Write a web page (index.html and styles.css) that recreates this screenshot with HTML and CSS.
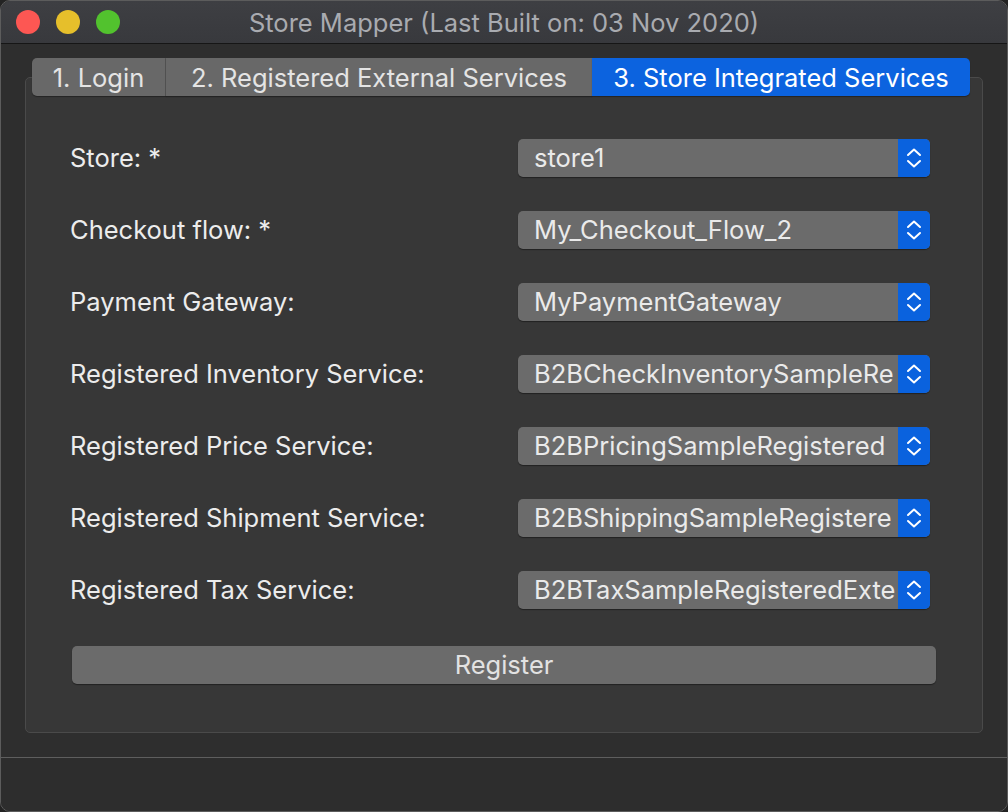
FILE: index.html
```html
<!DOCTYPE html>
<html>
<head>
<meta charset="utf-8">
<link rel="stylesheet" href="styles.css">
</head>
<body>
<div class="window">
  <div class="titlebar">
    <div class="lights">
      <span class="light red"></span>
      <span class="light yellow"></span>
      <span class="light green"></span>
    </div>
    <div class="title">Store Mapper (Last Built on: 03 Nov 2020)</div>
  </div>
  <div class="content">
    <div class="tabs">
      <div class="tab t1">1. Login</div>
      <div class="tab t2">2. Registered External Services</div>
      <div class="tab t3 active">3. Store Integrated Services</div>
    </div>
    <div class="group">
      <div class="form">
        <div class="label">Store: *</div>
        <div class="popup"><span class="value">store1</span><span class="arrows"><svg width="18" height="26" viewBox="0 0 18 26"><path d="M3 10 L9 4.5 L15 10 M3 16 L9 21.5 L15 16" fill="none" stroke="#fff" stroke-width="2" stroke-linecap="round" stroke-linejoin="round"/></svg></span></div>

        <div class="label">Checkout flow: *</div>
        <div class="popup"><span class="value">My_Checkout_Flow_2</span><span class="arrows"><svg width="18" height="26" viewBox="0 0 18 26"><path d="M3 10 L9 4.5 L15 10 M3 16 L9 21.5 L15 16" fill="none" stroke="#fff" stroke-width="2" stroke-linecap="round" stroke-linejoin="round"/></svg></span></div>

        <div class="label">Payment Gateway:</div>
        <div class="popup"><span class="value">MyPaymentGateway</span><span class="arrows"><svg width="18" height="26" viewBox="0 0 18 26"><path d="M3 10 L9 4.5 L15 10 M3 16 L9 21.5 L15 16" fill="none" stroke="#fff" stroke-width="2" stroke-linecap="round" stroke-linejoin="round"/></svg></span></div>

        <div class="label">Registered Inventory Service:</div>
        <div class="popup"><span class="value">B2BCheckInventorySampleRe</span><span class="arrows"><svg width="18" height="26" viewBox="0 0 18 26"><path d="M3 10 L9 4.5 L15 10 M3 16 L9 21.5 L15 16" fill="none" stroke="#fff" stroke-width="2" stroke-linecap="round" stroke-linejoin="round"/></svg></span></div>

        <div class="label">Registered Price Service:</div>
        <div class="popup"><span class="value">B2BPricingSampleRegistered</span><span class="arrows"><svg width="18" height="26" viewBox="0 0 18 26"><path d="M3 10 L9 4.5 L15 10 M3 16 L9 21.5 L15 16" fill="none" stroke="#fff" stroke-width="2" stroke-linecap="round" stroke-linejoin="round"/></svg></span></div>

        <div class="label">Registered Shipment Service:</div>
        <div class="popup"><span class="value">B2BShippingSampleRegistere</span><span class="arrows"><svg width="18" height="26" viewBox="0 0 18 26"><path d="M3 10 L9 4.5 L15 10 M3 16 L9 21.5 L15 16" fill="none" stroke="#fff" stroke-width="2" stroke-linecap="round" stroke-linejoin="round"/></svg></span></div>

        <div class="label">Registered Tax Service:</div>
        <div class="popup"><span class="value">B2BTaxSampleRegisteredExte</span><span class="arrows"><svg width="18" height="26" viewBox="0 0 18 26"><path d="M3 10 L9 4.5 L15 10 M3 16 L9 21.5 L15 16" fill="none" stroke="#fff" stroke-width="2" stroke-linecap="round" stroke-linejoin="round"/></svg></span></div>
      </div>
      <div class="button">Register</div>
    </div>
  </div>
  <div class="statusbar"></div>
</div>
</body>
</html>
```

FILE: styles.css
```css
html, body {
  margin: 0;
  padding: 0;
  background: #232323;
}
body {
  font-family: Inter, "Noto Sans", Roboto, sans-serif;
  -webkit-font-smoothing: antialiased;
}
.window {
  width: 1008px;
  height: 812px;
  box-sizing: border-box;
  border: 1px solid #5c5c5c;
  border-radius: 10px;
  overflow: hidden;
  background: #2d2d2d;
  display: flex;
  flex-direction: column;
}
.titlebar {
  height: 42px;
  flex: none;
  background: linear-gradient(#3e3f43, #38393d);
  border-bottom: 1px solid #161616;
  display: flex;
  align-items: center;
  position: relative;
}
.lights {
  display: flex;
  gap: 16px;
  padding-left: 15px;
  position: relative;
  z-index: 1;
}
.light {
  width: 24px;
  height: 24px;
  border-radius: 50%;
  display: block;
}
.red { background: #fd5753; }
.yellow { background: #e6bf2b; }
.green { background: #52c22e; }
.title {
  position: absolute;
  left: 0;
  right: 0;
  top: 0;
  bottom: 0;
  display: flex;
  align-items: center;
  justify-content: center;
  color: #a9abb0;
  font-size: 25.5px;
}
.content {
  flex: 1;
  padding: 14px 24px 24px 24px;
  display: flex;
  flex-direction: column;
  background: #2e2e2e;
}
.tabs {
  display: flex;
  height: 38px;
  margin-left: 7px;
  position: relative;
  z-index: 1;
  align-self: flex-start;
}
.tab {
  background: #686868;
  color: #e4e4e4;
  font-size: 25.5px;
  display: flex;
  align-items: center;
  justify-content: center;
  box-shadow: 0 1px 1px rgba(0,0,0,0.35);
}
.t1 {
  width: 133px;
  border-radius: 5px 0 0 5px;
  border-right: 1px solid #555;
}
.t2 { width: 426px; }
.t3 {
  width: 378px;
  border-radius: 0 5px 5px 0;
}
.tab.active {
  background: #0c63df;
  color: #ffffff;
}
.group {
  margin-top: -19px;
  height: 656px;
  box-sizing: border-box;
  border: 1px solid #4a4a4a;
  border-radius: 5px;
  background: #373737;
  padding: 61px 52px 48px 44px;
  display: flex;
  flex-direction: column;
}
.form {
  display: grid;
  grid-template-columns: 448px 412px;
  row-gap: 34px;
}
.label {
  height: 38px;
  display: flex;
  align-items: center;
  color: #ececec;
  font-size: 25.5px;
  padding-bottom: 1px;
  box-sizing: border-box;
}
.popup {
  height: 38px;
  background: #6b6b6b;
  border-radius: 5px;
  box-shadow: 0 1px 1px rgba(0,0,0,0.4);
  display: flex;
  overflow: hidden;
}
.value {
  flex: 1;
  min-width: 0;
  overflow: hidden;
  white-space: nowrap;
  padding-left: 16px;
  color: #eaeaea;
  font-size: 25.5px;
  line-height: 37px;
}
.arrows {
  flex: none;
  width: 32px;
  background: #0a62de;
  display: flex;
  align-items: center;
  justify-content: center;
}
.button {
  margin-top: 37px;
  margin-left: 2px;
  margin-right: -6px;
  height: 38px;
  background: #6b6b6b;
  border-radius: 5px;
  box-shadow: 0 1px 1px rgba(0,0,0,0.4);
  display: flex;
  align-items: center;
  justify-content: center;
  color: #e2e2e2;
  font-size: 25.5px;
  padding-bottom: 1px;
  box-sizing: border-box;
}
.statusbar {
  height: 53px;
  flex: none;
  border-top: 1px solid #5e5e5e;
  background: #2d2d2d;
}
```
